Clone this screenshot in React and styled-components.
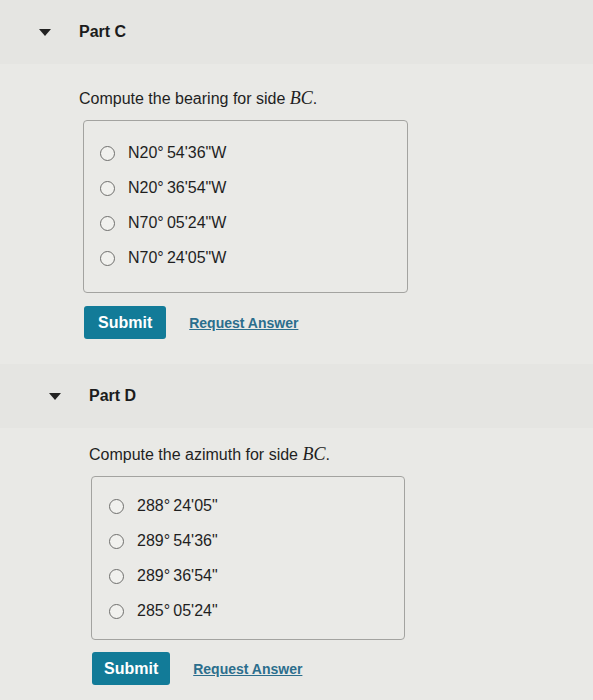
import React from "react";
import styled, { createGlobalStyle } from "styled-components";

const GlobalStyle = createGlobalStyle`
  html, body {
    margin: 0;
    padding: 0;
    background: #e8e8e5;
  }
  body {
    font-family: "Liberation Sans", Arial, sans-serif;
    color: #222;
  }
`;

const Page = styled.div`
  width: 593px;
  height: 700px;
  overflow: hidden;
  background: #e9e9e6;
`;

const Section = styled.section`
  padding-left: ${(p) => p.indent}px;
`;

const PartHeader = styled.div`
  display: flex;
  align-items: center;
  height: 64px;
  margin-left: -${(p) => p.indent}px;
  padding-left: ${(p) => 39 + p.indent}px;
  background: #e5e5e2;
`;

const Caret = styled.span`
  width: 0;
  height: 0;
  border-left: 6px solid transparent;
  border-right: 6px solid transparent;
  border-top: 7px solid #222;
  margin-right: 28px;
`;

const PartTitle = styled.h2`
  margin: 0;
  font-size: 16px;
  font-weight: 700;
  color: #1c1c1c;
`;

const Body = styled.div`
  padding-left: 79px;
  padding-top: ${(p) => p.top}px;
`;

const Prompt = styled.p`
  margin: 0;
  font-size: 16px;
  line-height: 20px;
  color: #1f1f1f;
`;

const MathVar = styled.span`
  font-family: "Liberation Serif", "Times New Roman", serif;
  font-style: italic;
  font-size: 18px;
`;

const Choices = styled.div`
  margin-top: ${(p) => p.mt}px;
  margin-left: ${(p) => p.ml}px;
  width: ${(p) => p.width}px;
  box-sizing: border-box;
  border: 1px solid #a3a3a0;
  border-radius: 4px;
  background: #eaeae7;
  padding: ${(p) => p.pad};
  display: flex;
  flex-direction: column;
  gap: 15px;
`;

const Choice = styled.label`
  display: flex;
  align-items: center;
  height: 20px;
  font-size: 16px;
  color: #1f1f1f;
`;

const Radio = styled.span`
  width: 15px;
  height: 15px;
  box-sizing: border-box;
  border: 1.5px solid #6f6f6d;
  border-radius: 50%;
  background: #f1f1ee;
  margin-right: 13px;
`;

const Actions = styled.div`
  display: flex;
  align-items: center;
  gap: 23px;
  margin-top: ${(p) => p.mt}px;
  margin-left: ${(p) => p.ml}px;
`;

const SubmitButton = styled.button`
  height: 33px;
  padding: 0 ${(p) => p.px}px;
  border: none;
  border-radius: 3px;
  background: #127b98;
  color: #fff;
  font-family: "Liberation Sans", Arial, sans-serif;
  font-size: 16px;
  font-weight: 700;
`;

const RequestLink = styled.a`
  font-size: 14px;
  font-weight: 700;
  color: #2b6e8d;
  text-decoration: underline;
`;

const Spacer = styled.div`
  height: 25px;
`;

const parts = [
  {
    name: "Part C",
    indent: 0,
    top: 24,
    prompt: "Compute the bearing for side ",
    box: { mt: 11, ml: 4, width: 325, pad: "22px 0 24px 16px" },
    actions: { mt: 13, ml: 5 },
    buttonPad: 14,
    options: [
      "N20°\u200954'36\"W",
      "N20°\u200936'54\"W",
      "N70°\u200905'24\"W",
      "N70°\u200924'05\"W",
    ],
  },
  {
    name: "Part D",
    indent: 10,
    top: 16,
    prompt: "Compute the azimuth for side ",
    box: { mt: 11, ml: 2, width: 314, pad: "19px 0 18px 17px" },
    actions: { mt: 12, ml: 3 },
    buttonPad: 12,
    options: [
      "288°\u200924'05\"",
      "289°\u200954'36\"",
      "289°\u200936'54\"",
      "285°\u200905'24\"",
    ],
  },
];

const Part = ({ part }) => (
  <Section indent={part.indent}>
    <PartHeader indent={part.indent}>
      <Caret />
      <PartTitle>{part.name}</PartTitle>
    </PartHeader>
    <Body top={part.top}>
      <Prompt>
        {part.prompt}
        <MathVar>BC</MathVar>.
      </Prompt>
      <Choices {...part.box}>
        {part.options.map((opt) => (
          <Choice key={opt}>
            <Radio />
            {opt}
          </Choice>
        ))}
      </Choices>
      <Actions {...part.actions}>
        <SubmitButton px={part.buttonPad}>Submit</SubmitButton>
        <RequestLink href="#">Request Answer</RequestLink>
      </Actions>
    </Body>
  </Section>
);

export default function App() {
  return (
    <Page>
      <GlobalStyle />
      <Part part={parts[0]} />
      <Spacer />
      <Part part={parts[1]} />
    </Page>
  );
}
